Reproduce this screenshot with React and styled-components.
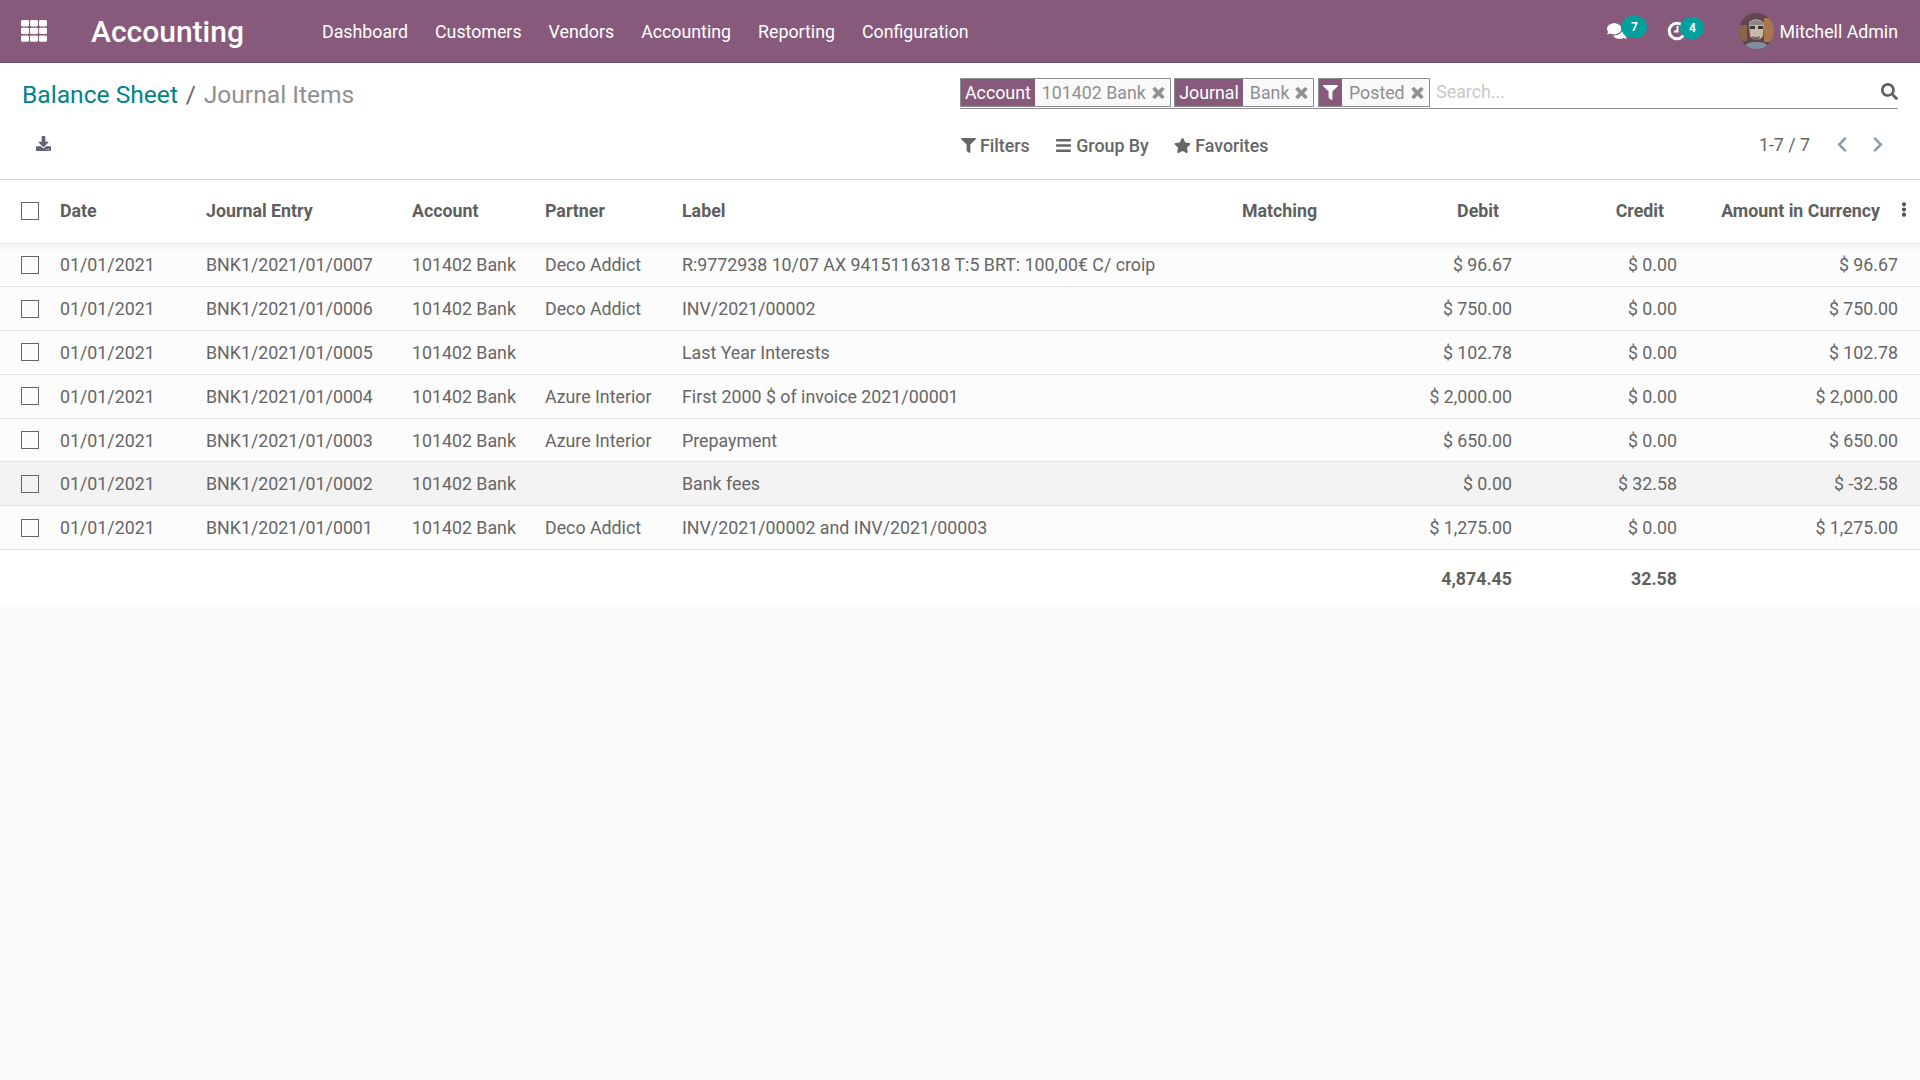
import React from 'react';
import styled, { createGlobalStyle } from 'styled-components';
import { FaFilter, FaBars, FaStar, FaTimes, FaSearch, FaChevronLeft, FaChevronRight, FaDownload, FaComments, FaEllipsisV } from 'react-icons/fa';

const Global = createGlobalStyle`
  html, body { margin: 0; padding: 0; height: 100%; }
  body { background: #f9f9f9; font-family: Roboto, "Liberation Sans", sans-serif; font-size: 17.8px; color: #666; }
  * { box-sizing: border-box; }
`;

const Page = styled.div`display:flex;flex-direction:column;min-height:1080px;`;
const NavBar = styled.header`
  height: 63px; background: #875a7b; border-bottom: 1px solid #6f4a66; color: #fff;
  display: flex; align-items: center; padding: 0 22px 0 21px;
`;
const AppsIcon = styled.svg`width:26px;height:22px;fill:#fff;margin-right:44px;`;
const Brand = styled.div`font-size:30px;font-weight:500;margin-right:77px;width:154px;white-space:nowrap;`;
const Menu = styled.nav`display:flex;gap:27px;font-size:17.8px;flex:1;`;
const Systray = styled.div`display:flex;align-items:center;`;
const IconSlot = styled.div`position:relative;width:${p=>p.$w}px;height:36px;display:flex;align-items:center;padding-left:${p=>p.$pl||0}px;`;
const Badge = styled.span`
  position:absolute;left:${p=>p.$left}px;top:${p=>p.$top}px;min-width:${p=>p.$w}px;height:22px;border-radius:11px;
  background:#00a09d;color:#fff;font-size:12px;font-weight:700;display:flex;align-items:center;justify-content:center;
`;
const UserName = styled.span`font-size:17.8px;white-space:nowrap;margin-left:5px;`;
const Avatar = styled.svg`width:35px;height:36px;display:block;`;

const Panel = styled.section`
  height: 117px; background:#fff; border-bottom:1px solid #d3d3d3;
  display:grid; grid-template-columns: 960px 1fr; grid-template-rows: 62px 1fr; padding-right:22px;
`;
const Crumbs = styled.div`display:flex;align-items:flex-start;padding:17px 0 0 22px;font-size:24.6px;color:#8f8f8f;gap:7.8px;`;
const CrumbLink = styled.span`color:#00848a;`;
const Slash = styled.span`color:#666;`;
const SearchBox = styled.div`
  display:flex;align-items:center;height:31px;margin-top:15px;border-bottom:1px solid #8f8f8f;gap:3.5px;
`;
const Facet = styled.div`display:flex;height:29px;margin-bottom:1px;border:1px solid #8f8f8f;background:#f9f9f9;color:#8f8f8f;align-items:stretch;white-space:nowrap;font-size:17.8px;`;
const FacetLabel = styled.span`background:#875a7b;color:#fff;padding:0 4px;display:flex;align-items:center;`;
const FacetValue = styled.span`padding:0 4px 0 7px;display:flex;align-items:center;gap:5px;`;
const FacetClose = styled(FaTimes)`width:15px;height:16px;color:#8f8f8f;stroke:#8f8f8f;stroke-width:30;`;
const SearchInput = styled.div`flex:1;color:#c8c8c8;padding:0 0 3px 3px;font-size:17.8px;`;
const SearchIcon = styled(FaSearch)`width:17px;height:17px;color:#5f5f5f;margin-bottom:3px;`;
const ExportCell = styled.div`padding:10.5px 0 0 36px;color:#5f6373;`;
const DownloadIcon = styled(FaDownload)`width:15px;height:15px;display:block;`;
const Tools = styled.div`display:flex;align-items:center;justify-content:space-between;padding:0 0 13px 1px;font-size:17.8px;`;
const ToolGroup = styled.div`display:flex;gap:25.5px;font-weight:500;color:#666;`;
const Tool = styled.span`display:flex;align-items:center;gap:4px;white-space:nowrap;`;
const Pager = styled.div`display:flex;align-items:center;color:#666;padding:0 13px 3px 0;`;
const Arrows = styled.span`display:flex;gap:22px;color:#8f9bab;margin-left:25px;`;
const Arrow = styled.span`display:flex;width:14px;height:17px;svg{width:14px;height:17px;}`;

const Table = styled.table`width:1920px;border-collapse:collapse;table-layout:fixed;background:#fff;`;
const HeadCell = styled.th`
  height:63px;padding:0 ${p=>p.$pr||12}px 1px 12px;text-align:${p=>p.$right?'right':'left'};font-weight:700;color:#5f5f5f;
  position:relative;border-bottom:1px solid #e3e3e3;white-space:nowrap;font-size:17.8px;
`;
const CheckCell = styled.td`padding:0 0 0 21px;border-bottom:1px solid #e1e1e1;`;
const CheckHead = styled.th`padding:0 0 1px 21px;border-bottom:1px solid #e3e3e3;`;
const Check = styled.span`display:block;width:18px;height:18px;border:1.5px solid #666;background:${p=>p.$white?'#fff':'transparent'};`;
const MenuDots = styled(FaEllipsisV)`position:absolute;right:11px;top:22px;width:10px;height:15px;color:#555;`;
const Row = styled.tr`
  height:43.8px;background:${p=>p.$hover?'#f3f3f3':'#fcfcfc'};
  box-shadow:${p=>p.$first?'inset 0 10px 8px -8px #ececec':'none'};
`;
const Cell = styled.td`
  padding:0 ${p=>p.$pr||12}px 0 12px;text-align:${p=>p.$right?'right':'left'};border-bottom:1px solid #e1e1e1;white-space:nowrap;overflow:hidden;color:#666;
`;
const FootRow = styled.tr`height:57px;background:#fff;`;
const FootCell = styled.td`padding:0 12px;text-align:right;font-weight:700;color:#5f5f5f;`;

const rows = [
  ['BNK1/2021/01/0007','Deco Addict','R:9772938 10/07 AX 9415116318 T:5 BRT: 100,00€ C/ croip','$ 96.67','$ 0.00','$ 96.67'],
  ['BNK1/2021/01/0006','Deco Addict','INV/2021/00002','$ 750.00','$ 0.00','$ 750.00'],
  ['BNK1/2021/01/0005','','Last Year Interests','$ 102.78','$ 0.00','$ 102.78'],
  ['BNK1/2021/01/0004','Azure Interior','First 2000 $ of invoice 2021/00001','$ 2,000.00','$ 0.00','$ 2,000.00'],
  ['BNK1/2021/01/0003','Azure Interior','Prepayment','$ 650.00','$ 0.00','$ 650.00'],
  ['BNK1/2021/01/0002','','Bank fees','$ 0.00','$ 32.58','$ -32.58'],
  ['BNK1/2021/01/0001','Deco Addict','INV/2021/00002 and INV/2021/00003','$ 1,275.00','$ 0.00','$ 1,275.00'],
];
const widths = [48,146,206,133,137,560,130,164,165,231];
const menu = ['Dashboard','Customers','Vendors','Accounting','Reporting','Configuration'];

const Apps = () => (
  <AppsIcon viewBox="0 0 26 22">
    {[0,1,2].map(r=>[0,1,2].map(c=><rect key={r+'-'+c} x={c*9} y={r*7.7} width="8" height="6.4" rx="1.4"/>))}
  </AppsIcon>
);
const ClockIcon = () => (
  <svg width="20" height="20" viewBox="0 0 20 20" fill="none" stroke="#fff">
    <circle cx="10" cy="10" r="7.8" strokeWidth="3"/>
    <path d="M10.5 5v5.5H7" strokeWidth="2"/>
  </svg>
);
const Face = () => (
  <Avatar viewBox="0 0 35 36">
    <defs><clipPath id="av"><ellipse cx="17.5" cy="18" rx="17.5" ry="18"/></clipPath></defs>
    <g clipPath="url(#av)">
      <rect width="35" height="36" fill="#5f4650"/>
      <rect x="25" y="5" width="10" height="24" fill="#a9764e"/>
      <rect x="0" y="12" width="8" height="16" fill="#8a6446"/>
      <path d="M10 9q8-6 15 1l-1 13q-6 8-13 0z" fill="#c9b9aa"/>
      <path d="M10 10q7-6 15 0l-1 2H11z" fill="#8d8784"/>
      <rect x="11" y="13" width="5" height="3" fill="#3f3236"/>
      <rect x="19" y="13" width="5" height="3" fill="#3f3236"/>
      <path d="M13 23q4 2 8 0l-1 4h-6z" fill="#7a6660"/>
      <path d="M4 36q3-8 13-7 11-1 14 7z" fill="#7f8f9c"/>
    </g>
  </Avatar>
);

export default function App() {
  return (
    <Page>
      <Global />
      <NavBar>
        <Apps />
        <Brand>Accounting</Brand>
        <Menu>{menu.map(m=><span key={m}>{m}</span>)}</Menu>
        <Systray>
          <IconSlot $w={61} $pl={1}>
            <FaComments size={20} color="#fff" />
            <Badge $left={15} $top={3} $w={26}>7</Badge>
          </IconSlot>
          <IconSlot $w={72}>
            <ClockIcon />
            <Badge $left={13} $top={4} $w={24}>4</Badge>
          </IconSlot>
          <Face />
          <UserName>Mitchell Admin</UserName>
        </Systray>
      </NavBar>
      <Panel>
        <Crumbs><CrumbLink>Balance Sheet</CrumbLink><Slash>/</Slash><span>Journal Items</span></Crumbs>
        <SearchBox>
          <Facet><FacetLabel>Account</FacetLabel><FacetValue>101402 Bank<FacetClose/></FacetValue></Facet>
          <Facet><FacetLabel>Journal</FacetLabel><FacetValue>Bank<FacetClose/></FacetValue></Facet>
          <Facet><FacetLabel><FaFilter size={15}/></FacetLabel><FacetValue>Posted<FacetClose/></FacetValue></Facet>
          <SearchInput>Search...</SearchInput>
          <SearchIcon/>
        </SearchBox>
        <ExportCell><DownloadIcon/></ExportCell>
        <Tools>
          <ToolGroup>
            <Tool><FaFilter size={15}/>Filters</Tool>
            <Tool><FaBars size={17}/>Group By</Tool>
            <Tool><FaStar size={17}/>Favorites</Tool>
          </ToolGroup>
          <Pager>1-7 / 7<Arrows><Arrow><FaChevronLeft/></Arrow><Arrow><FaChevronRight/></Arrow></Arrows></Pager>
        </Tools>
      </Panel>
      <Table>
        <colgroup>{widths.map((w,i)=><col key={i} style={{width:w}}/>)}</colgroup>
        <thead>
          <tr>
            <CheckHead><Check $white/></CheckHead>
            <HeadCell>Date</HeadCell>
            <HeadCell>Journal Entry</HeadCell>
            <HeadCell>Account</HeadCell>
            <HeadCell>Partner</HeadCell>
            <HeadCell>Label</HeadCell>
            <HeadCell>Matching</HeadCell>
            <HeadCell $right $pr={25}>Debit</HeadCell>
            <HeadCell $right $pr={25}>Credit</HeadCell>
            <HeadCell $right $pr={40}>Amount in Currency<MenuDots/></HeadCell>
          </tr>
        </thead>
        <tbody>
          {rows.map((r,i)=>(
            <Row key={r[0]} $first={i===0} $hover={i===5}>
              <CheckCell><Check/></CheckCell>
              <Cell>01/01/2021</Cell>
              <Cell>{r[0]}</Cell>
              <Cell>101402 Bank</Cell>
              <Cell>{r[1]}</Cell>
              <Cell>{r[2]}</Cell>
              <Cell/>
              <Cell $right>{r[3]}</Cell>
              <Cell $right>{r[4]}</Cell>
              <Cell $right $pr={22}>{r[5]}</Cell>
            </Row>
          ))}
        </tbody>
        <tfoot>
          <FootRow>
            <FootCell colSpan={8}>4,874.45</FootCell>
            <FootCell>32.58</FootCell>
            <FootCell/>
          </FootRow>
        </tfoot>
      </Table>
    </Page>
  );
}
